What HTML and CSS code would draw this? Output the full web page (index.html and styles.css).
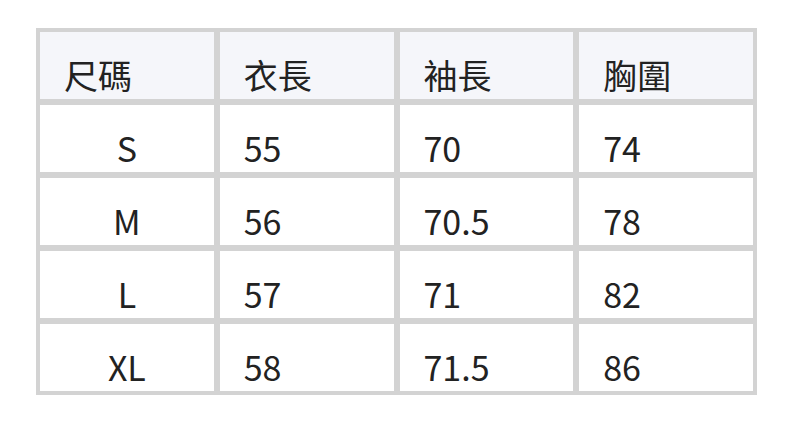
FILE: index.html
```
<!DOCTYPE html>
<html lang="zh-Hant">
<head>
<meta charset="utf-8">
<link rel="stylesheet" href="styles.css">
</head>
<body>
<div class="page">
  <div class="size-table" role="table">
    <div class="cell head" role="columnheader">尺碼</div>
    <div class="cell head" role="columnheader">衣長</div>
    <div class="cell head" role="columnheader">袖長</div>
    <div class="cell head" role="columnheader">胸圍</div>

    <div class="cell size" role="cell">S</div>
    <div class="cell" role="cell">55</div>
    <div class="cell" role="cell">70</div>
    <div class="cell" role="cell">74</div>

    <div class="cell size" role="cell">M</div>
    <div class="cell" role="cell">56</div>
    <div class="cell" role="cell">70.5</div>
    <div class="cell" role="cell">78</div>

    <div class="cell size" role="cell">L</div>
    <div class="cell" role="cell">57</div>
    <div class="cell" role="cell">71</div>
    <div class="cell" role="cell">82</div>

    <div class="cell size" role="cell">XL</div>
    <div class="cell" role="cell">58</div>
    <div class="cell" role="cell">71.5</div>
    <div class="cell" role="cell">86</div>
  </div>
</div>
</body>
</html>
```
FILE: styles.css
```
html, body {
  margin: 0;
  padding: 0;
  background: #ffffff;
}
.page {
  padding: 28px 35px 0 36px;
}
.size-table {
  box-sizing: border-box;
  width: 721px;
  display: grid;
  grid-template-columns: repeat(4, 1fr);
  grid-auto-rows: 67px;
  gap: 6px;
  padding: 4px;
  background: #d3d3d3;
  font-family: "Noto Sans CJK TC", "Noto Sans", sans-serif;
  font-size: 34px;
  color: #222222;
}
.cell {
  display: flex;
  align-items: flex-end;
  justify-content: flex-start;
  padding: 0 0 4px 24px;
  line-height: 40px;
  background: #ffffff;
}
.cell.head {
  background: #f5f6fa;
}
.cell.size {
  justify-content: center;
  padding-left: 0;
}
```
